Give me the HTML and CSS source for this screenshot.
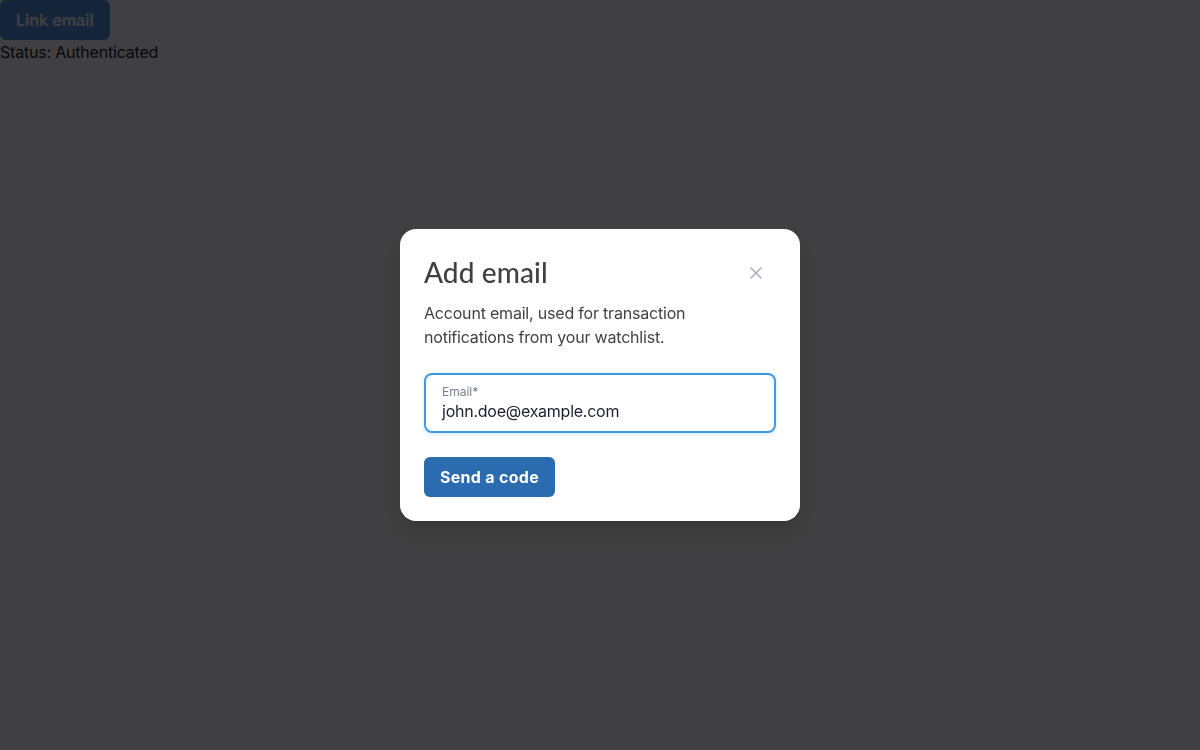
FILE: index.html
```html
<!DOCTYPE html>
<html lang="en">
<head>
<meta charset="utf-8">
<link rel="stylesheet" href="styles.css">
<title>Add email</title>
</head>
<body>
<div class="page">
  <button class="link-btn" type="button">Link email</button>
  <div class="status">Status: Authenticated</div>
</div>
<div class="overlay">
  <section class="dialog" role="dialog" aria-labelledby="dlg-title">
    <header class="dialog-head">
      <h2 id="dlg-title" class="dialog-title">Add email</h2>
      <button class="close" type="button" aria-label="Close">
        <svg width="12" height="12" viewBox="0 0 12 12" aria-hidden="true"><path d="M1 1L11 11M11 1L1 11" stroke="currentColor" stroke-width="1.5" stroke-linecap="round"/></svg>
      </button>
    </header>
    <p class="dialog-desc">Account email, used for transaction notifications from your watchlist.</p>
    <label class="field">
      <span class="field-label">Email*</span>
      <span class="field-value">john.doe@example.com</span>
    </label>
    <div class="actions">
      <button class="primary" type="button">Send a code</button>
    </div>
  </section>
</div>
</body>
</html>
```

FILE: styles.css
```css
* { box-sizing: border-box; }
html, body { margin: 0; padding: 0; }
body {
  font-family: Inter, "Liberation Sans", sans-serif;
  background: #ffffff;
  color: #1a1a1a;
  width: 1200px;
  height: 750px;
  overflow: hidden;
}
.page {
  display: flex;
  flex-direction: column;
  align-items: flex-start;
}
.link-btn {
  height: 40px;
  padding: 0 16px;
  border: 0;
  border-radius: 6px;
  background: #5a98e0;
  color: #ffffff;
  font-family: Inter, sans-serif;
  font-size: 16px;
  font-weight: 600;
}
.status {
  font-size: 16px;
  line-height: 24px;
  letter-spacing: -0.2px;
  color: #1a1a1a;
}
.overlay {
  position: fixed;
  inset: 0;
  background: rgba(0, 0, 3, 0.75);
  display: flex;
  align-items: center;
  justify-content: center;
}
.dialog {
  width: 400px;
  background: #ffffff;
  border-radius: 16px;
  padding: 24px;
  display: flex;
  flex-direction: column;
  box-shadow: 0 10px 20px rgba(0,0,0,0.15);
}
.dialog-head {
  display: flex;
  align-items: center;
  justify-content: space-between;
  height: 40px;
}
.dialog-title {
  margin: 0 0 2px;
  font-family: Lato, "Open Sans", sans-serif;
  font-weight: 500;
  font-size: 28px;
  line-height: 36px;
  letter-spacing: 0.1px;
  color: #3f3f46;
}
.close {
  width: 32px;
  height: 32px;
  margin-right: 4px;
  border: 0;
  background: transparent;
  color: #a0aec0;
  display: flex;
  align-items: center;
  justify-content: center;
  padding: 0;
}
.dialog-desc {
  margin: 8px 0 0;
  font-size: 16px;
  line-height: 24px;
  letter-spacing: -0.2px;
  color: #3f3f46;
}
.field {
  margin-top: 24px;
  height: 60px;
  border: 2px solid #4299e1;
  border-radius: 8px;
  padding: 9px 16px 0;
  display: flex;
  flex-direction: column;
  box-shadow: 0 1px 4px rgba(66,153,225,0.25);
}
.field-label {
  font-size: 12px;
  line-height: 16px;
  color: #718096;
}
.field-value {
  font-size: 16px;
  line-height: 22px;
  letter-spacing: -0.25px;
  color: #1a202c;
}
.actions {
  margin-top: 24px;
  display: flex;
}
.primary {
  height: 40px;
  padding: 0 16px 1px;
  border: 0;
  border-radius: 6px;
  background: #2b6cb0;
  color: #ffffff;
  font-family: Inter, sans-serif;
  font-size: 16px;
  font-weight: 700;
  letter-spacing: 0.3px;
}
```
